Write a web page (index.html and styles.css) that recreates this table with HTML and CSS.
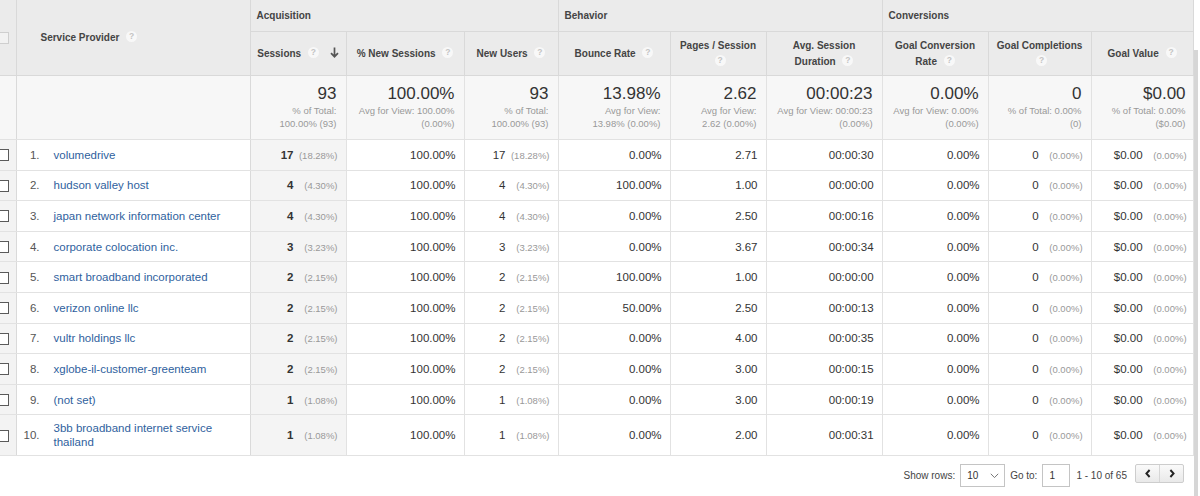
FILE: index.html
```html
<!DOCTYPE html>
<html>
<head>
<meta charset="utf-8">
<title>Service Provider</title>
<link rel="stylesheet" href="styles.css">
</head>
<body>
<div class="page">
<table class="report">
  <colgroup>
    <col class="c-chk"><col class="c-dim"><col class="c-ses"><col class="c-new"><col class="c-nu">
    <col class="c-br"><col class="c-pps"><col class="c-dur"><col class="c-gcr"><col class="c-gc"><col class="c-gv">
  </colgroup>
  <thead>
    <tr class="grp">
      <th class="chk" rowspan="2"><span class="box light"></span></th>
      <th class="dim" rowspan="2">Service Provider <span class="help">?</span></th>
      <th class="group" colspan="3">Acquisition</th>
      <th class="group" colspan="3">Behavior</th>
      <th class="group" colspan="3">Conversions</th>
    </tr>
    <tr class="hdr">
      <th>Sessions <span class="help">?</span> <svg class="arrow" width="9" height="11" viewBox="0 0 9 11"><path d="M4.5 0.5V9.5M1 6.2L4.5 9.7L8 6.2" fill="none" stroke="#555" stroke-width="1.7"/></svg></th>
      <th>% New Sessions <span class="help">?</span></th>
      <th>New Users <span class="help">?</span></th>
      <th>Bounce Rate <span class="help">?</span></th>
      <th>Pages / Session<br><span class="help">?</span></th>
      <th>Avg. Session<br>Duration <span class="help">?</span></th>
      <th>Goal Conversion<br>Rate <span class="help">?</span></th>
      <th>Goal Completions<br><span class="help">?</span></th>
      <th>Goal Value <span class="help">?</span></th>
    </tr>
  </thead>
  <tbody>
    <tr class="tot">
      <td class="chk"></td>
      <td class="dim"></td>
      <td><div class="big">93</div><div class="sub">% of Total:<br>100.00% (93)</div></td>
      <td><div class="big">100.00%</div><div class="sub">Avg for View: 100.00%<br>(0.00%)</div></td>
      <td><div class="big">93</div><div class="sub">% of Total:<br>100.00% (93)</div></td>
      <td><div class="big">13.98%</div><div class="sub">Avg for View:<br>13.98% (0.00%)</div></td>
      <td><div class="big">2.62</div><div class="sub">Avg for View:<br>2.62 (0.00%)</div></td>
      <td><div class="big">00:00:23</div><div class="sub">Avg for View: 00:00:23<br>(0.00%)</div></td>
      <td><div class="big">0.00%</div><div class="sub">Avg for View: 0.00%<br>(0.00%)</div></td>
      <td><div class="big">0</div><div class="sub">% of Total: 0.00%<br>(0)</div></td>
      <td class="gv"><div class="big">$0.00</div><div class="sub">% of Total: 0.00%<br>($0.00)</div></td>
    </tr>
    <tr class="row">
      <td class="chk"><span class="box"></span></td>
      <td class="dim"><div class="name"><span class="idx">1.</span><a href="#">volumedrive</a></div></td>
      <td class="sorted"><b>17</b><span class="pct">(18.28%)</span></td>
      <td>100.00%</td>
      <td>17<span class="pct">(18.28%)</span></td>
      <td>0.00%</td><td>2.71</td><td>00:00:30</td><td>0.00%</td>
      <td>0<span class="pct">(0.00%)</span></td>
      <td class="gv">$0.00<span class="pct">(0.00%)</span></td>
    </tr>
    <tr class="row">
      <td class="chk"><span class="box"></span></td>
      <td class="dim"><div class="name"><span class="idx">2.</span><a href="#">hudson valley host</a></div></td>
      <td class="sorted"><b>4</b><span class="pct">(4.30%)</span></td>
      <td>100.00%</td>
      <td>4<span class="pct">(4.30%)</span></td>
      <td>100.00%</td><td>1.00</td><td>00:00:00</td><td>0.00%</td>
      <td>0<span class="pct">(0.00%)</span></td>
      <td class="gv">$0.00<span class="pct">(0.00%)</span></td>
    </tr>
    <tr class="row">
      <td class="chk"><span class="box"></span></td>
      <td class="dim"><div class="name"><span class="idx">3.</span><a href="#">japan network information center</a></div></td>
      <td class="sorted"><b>4</b><span class="pct">(4.30%)</span></td>
      <td>100.00%</td>
      <td>4<span class="pct">(4.30%)</span></td>
      <td>0.00%</td><td>2.50</td><td>00:00:16</td><td>0.00%</td>
      <td>0<span class="pct">(0.00%)</span></td>
      <td class="gv">$0.00<span class="pct">(0.00%)</span></td>
    </tr>
    <tr class="row">
      <td class="chk"><span class="box"></span></td>
      <td class="dim"><div class="name"><span class="idx">4.</span><a href="#">corporate colocation inc.</a></div></td>
      <td class="sorted"><b>3</b><span class="pct">(3.23%)</span></td>
      <td>100.00%</td>
      <td>3<span class="pct">(3.23%)</span></td>
      <td>0.00%</td><td>3.67</td><td>00:00:34</td><td>0.00%</td>
      <td>0<span class="pct">(0.00%)</span></td>
      <td class="gv">$0.00<span class="pct">(0.00%)</span></td>
    </tr>
    <tr class="row">
      <td class="chk"><span class="box"></span></td>
      <td class="dim"><div class="name"><span class="idx">5.</span><a href="#">smart broadband incorporated</a></div></td>
      <td class="sorted"><b>2</b><span class="pct">(2.15%)</span></td>
      <td>100.00%</td>
      <td>2<span class="pct">(2.15%)</span></td>
      <td>100.00%</td><td>1.00</td><td>00:00:00</td><td>0.00%</td>
      <td>0<span class="pct">(0.00%)</span></td>
      <td class="gv">$0.00<span class="pct">(0.00%)</span></td>
    </tr>
    <tr class="row">
      <td class="chk"><span class="box"></span></td>
      <td class="dim"><div class="name"><span class="idx">6.</span><a href="#">verizon online llc</a></div></td>
      <td class="sorted"><b>2</b><span class="pct">(2.15%)</span></td>
      <td>100.00%</td>
      <td>2<span class="pct">(2.15%)</span></td>
      <td>50.00%</td><td>2.50</td><td>00:00:13</td><td>0.00%</td>
      <td>0<span class="pct">(0.00%)</span></td>
      <td class="gv">$0.00<span class="pct">(0.00%)</span></td>
    </tr>
    <tr class="row">
      <td class="chk"><span class="box"></span></td>
      <td class="dim"><div class="name"><span class="idx">7.</span><a href="#">vultr holdings llc</a></div></td>
      <td class="sorted"><b>2</b><span class="pct">(2.15%)</span></td>
      <td>100.00%</td>
      <td>2<span class="pct">(2.15%)</span></td>
      <td>0.00%</td><td>4.00</td><td>00:00:35</td><td>0.00%</td>
      <td>0<span class="pct">(0.00%)</span></td>
      <td class="gv">$0.00<span class="pct">(0.00%)</span></td>
    </tr>
    <tr class="row">
      <td class="chk"><span class="box"></span></td>
      <td class="dim"><div class="name"><span class="idx">8.</span><a href="#">xglobe-il-customer-greenteam</a></div></td>
      <td class="sorted"><b>2</b><span class="pct">(2.15%)</span></td>
      <td>100.00%</td>
      <td>2<span class="pct">(2.15%)</span></td>
      <td>0.00%</td><td>3.00</td><td>00:00:15</td><td>0.00%</td>
      <td>0<span class="pct">(0.00%)</span></td>
      <td class="gv">$0.00<span class="pct">(0.00%)</span></td>
    </tr>
    <tr class="row">
      <td class="chk"><span class="box"></span></td>
      <td class="dim"><div class="name"><span class="idx">9.</span><a href="#">(not set)</a></div></td>
      <td class="sorted"><b>1</b><span class="pct">(1.08%)</span></td>
      <td>100.00%</td>
      <td>1<span class="pct">(1.08%)</span></td>
      <td>0.00%</td><td>3.00</td><td>00:00:19</td><td>0.00%</td>
      <td>0<span class="pct">(0.00%)</span></td>
      <td class="gv">$0.00<span class="pct">(0.00%)</span></td>
    </tr>
    <tr class="row tall">
      <td class="chk"><span class="box"></span></td>
      <td class="dim"><div class="name"><span class="idx">10.</span><a href="#">3bb broadband internet service thailand</a></div></td>
      <td class="sorted"><b>1</b><span class="pct">(1.08%)</span></td>
      <td>100.00%</td>
      <td>1<span class="pct">(1.08%)</span></td>
      <td>0.00%</td><td>2.00</td><td>00:00:31</td><td>0.00%</td>
      <td>0<span class="pct">(0.00%)</span></td>
      <td class="gv">$0.00<span class="pct">(0.00%)</span></td>
    </tr>
  </tbody>
</table>
<div class="pager">
  <span class="lbl">Show rows:</span>
  <div class="select"><span>10</span><svg width="9" height="6" viewBox="0 0 9 6"><path d="M0.8 0.8L4.5 4.6L8.2 0.8" fill="none" stroke="#777" stroke-width="1"/></svg></div>
  <span class="lbl">Go to:</span>
  <div class="input">1</div>
  <span class="lbl range">1 - 10 of 65</span>
  <div class="nav">
    <span class="btn"><svg width="6" height="9" viewBox="0 0 6 9"><path d="M4.6 1L1.4 4.5L4.6 8" fill="none" stroke="#222" stroke-width="1.9"/></svg></span>
    <span class="btn"><svg width="6" height="9" viewBox="0 0 6 9"><path d="M1.4 1L4.6 4.5L1.4 8" fill="none" stroke="#222" stroke-width="1.9"/></svg></span>
  </div>
</div>
<div class="scrollstrip"></div>
</div>
</body>
</html>
```

FILE: styles.css
```css
html, body {
  margin: 0;
  padding: 0;
  background: #fff;
  overflow: hidden;
}
body {
  font-family: "Liberation Sans", Arial, sans-serif;
  color: #333;
  width: 1200px;
  height: 496px;
}
.page {
  position: relative;
  width: 1200px;
  height: 496px;
}
.report {
  width: 1193px;
  table-layout: fixed;
  border-collapse: collapse;
  font-size: 11.5px;
}
.c-chk { width: 16px; }
.c-dim { width: 234px; }
.c-ses { width: 96px; }
.c-new { width: 118px; }
.c-nu { width: 94px; }
.c-br { width: 112px; }
.c-pps { width: 96px; }
.c-dur { width: 116px; }
.c-gcr { width: 106px; }
.c-gc { width: 103px; }
.c-gv { width: 102px; }

th {
  background: #ebebeb;
  color: #444;
  font-size: 10px;
  font-weight: bold;
  border: 1px solid #d9d9d9;
  border-top: none;
  padding: 0 4px;
  line-height: 16px;
  text-align: center;
}
.grp th { height: 31px; }
.hdr th { height: 43px; }
th.group {
  text-align: left;
  padding-left: 6px;
}
th.dim {
  text-align: left;
  padding-left: 24px;
}
th.chk, td.chk {
  padding: 0;
  border-left: none;
  text-align: left;
  overflow: visible;
}
.box {
  display: inline-block;
  width: 10px;
  height: 10px;
  border: 1px solid #5a5a5a;
  background: #fff;
  margin-left: -3px;
  vertical-align: middle;
}
.box.light {
  border-color: #cfcfcf;
  background: #f2f2f2;
}
.help {
  display: inline-block;
  width: 11px;
  height: 11px;
  border-radius: 50%;
  background: #f8f8f8;
  color: #c4c4c4;
  font-size: 8.5px;
  line-height: 11px;
  text-align: center;
  vertical-align: middle;
  margin-left: 4px;
  margin-top: -2px;
}
.arrow {
  vertical-align: middle;
  margin-left: 8px;
  margin-top: -3px;
}

td {
  border: 1px solid #e2e2e2;
  padding: 0 8px 0 4px;
  text-align: right;
  vertical-align: middle;
  white-space: nowrap;
}
td.gv { padding-right: 6px; }
td.chk { background: #f3f3f3; border-right-color: #dadada; }
td.dim { border-right-color: #dadada; }

.tot td {
  height: 55px;
  background: #f7f7f7;
  vertical-align: top;
  padding-top: 8px;
  padding-right: 9px;
  padding-bottom: 0;
}
.tot td.gv { padding-right: 7px; }
.big {
  font-size: 17px;
  line-height: 20px;
  color: #333;
}
.sub {
  font-size: 9.5px;
  line-height: 13px;
  color: #999;
}

.row td { height: 29.6px; }
.row td.sorted { background: #f4f4f4; }
.row.tall td { height: 40px; }
.row b { font-weight: bold; }
.pct {
  display: inline-block;
  width: 40px;
  margin-left: 4px;
  text-align: right;
  font-size: 9.5px;
  color: #999;
}
td.dim {
  text-align: left;
  padding: 0 10px 0 0;
  white-space: normal;
}
.name {
  display: flex;
  align-items: center;
  line-height: 14px;
}
.idx {
  flex: none;
  width: 23px;
  text-align: right;
  color: #555;
  margin-right: 14px;
}
.name a {
  color: #2f5f9e;
  text-decoration: none;
}

.pager {
  display: flex;
  justify-content: flex-end;
  align-items: center;
  padding: 8px 16px 0 0;
  font-size: 10px;
  color: #444;
}
.lbl { margin-right: 5px; }
.lbl.range { margin-left: 1px; margin-right: 8px; }
.select {
  box-sizing: border-box;
  width: 45px;
  height: 23px;
  border: 1px solid #c4c4c4;
  background: #fff;
  display: flex;
  align-items: center;
  justify-content: space-between;
  padding: 0 5px 0 6px;
  margin-right: 5px;
  color: #333;
}
.input {
  box-sizing: border-box;
  width: 28px;
  height: 23px;
  border: 1px solid #c4c4c4;
  background: #fff;
  display: flex;
  align-items: center;
  padding-left: 6px;
  margin-right: 5px;
  color: #333;
}
.nav {
  display: flex;
  border: 1px solid #cdcdcd;
  border-radius: 2px;
  height: 17px;
  margin-top: -4px;
  background: linear-gradient(#fafafa, #e9e9e9);
}
.btn {
  width: 23px;
  display: flex;
  align-items: center;
  justify-content: center;
}
.btn + .btn { border-left: 1px solid #d6d6d6; }
.scrollstrip {
  position: absolute;
  left: 1194px;
  top: 50px;
  width: 4px;
  bottom: 0;
  background: #d6d6d6;
}
```
